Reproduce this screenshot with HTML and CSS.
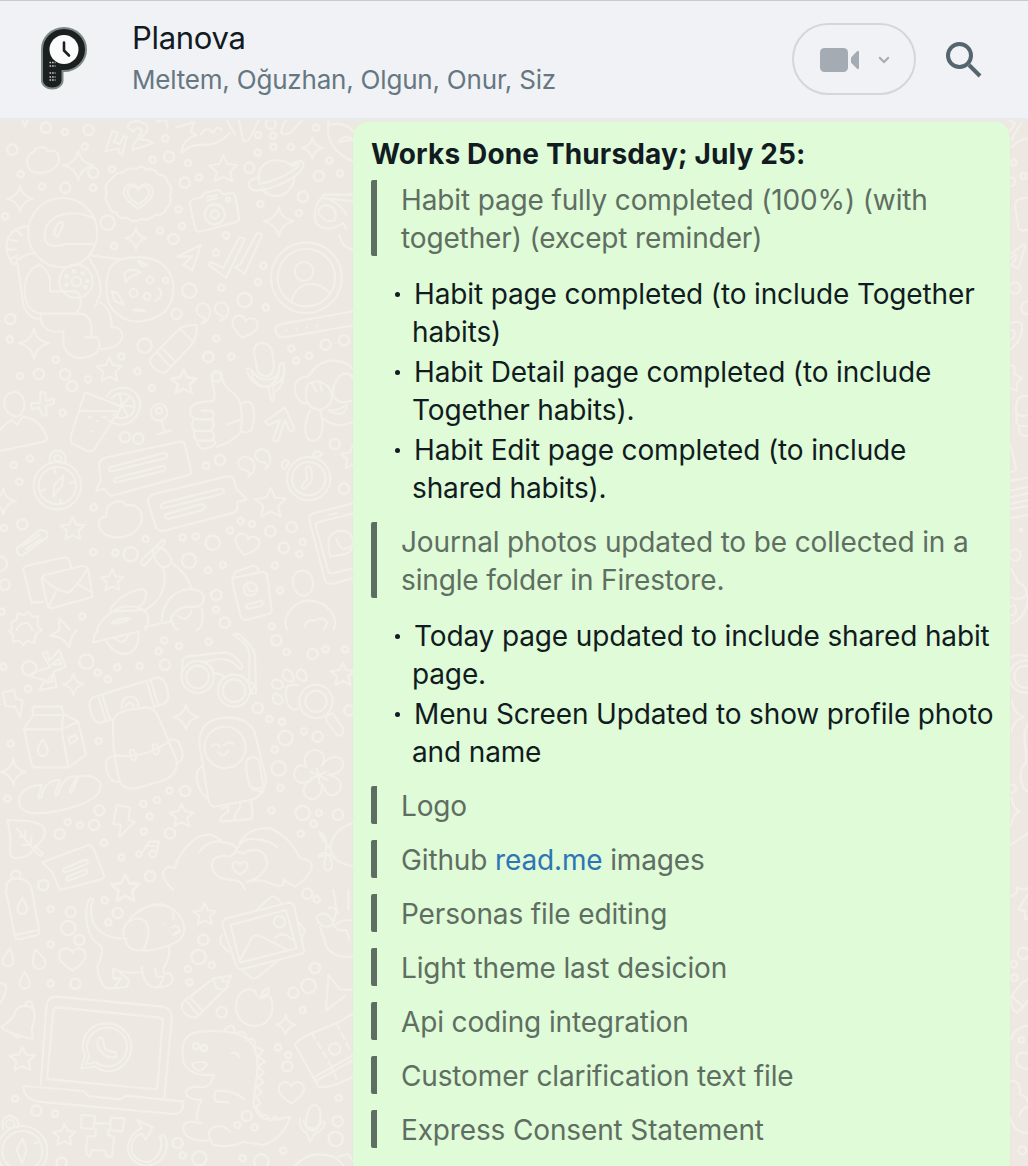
FILE: index.html
```html
<!DOCTYPE html>
<html lang="en">
<head>
<meta charset="utf-8">
<title>Planova</title>
<link rel="stylesheet" href="styles.css">
</head>
<body>
<header class="topbar">
  <svg class="avatar" viewBox="0 0 80 80" aria-hidden="true">
    <circle cx="40" cy="40" r="39" fill="#f1f2f4"/>
    <path d="M18 61.500V30.500a22 21.500 0 1 1 22 21.500H38.500V61.500a10.200 8 0 0 1-20.500 0z" fill="#1b1f20" stroke="#7b8987" stroke-width="2"/>
    <circle cx="40" cy="30.500" r="14.500" fill="#fbfbfb"/>
    <path d="M40 23.500v8l5 5" fill="none" stroke="#1b1f20" stroke-width="2.600" stroke-linecap="round" stroke-linejoin="round"/>
    <path d="M25.500 43.500h6M25.500 47h6M25.500 54h6M25.500 58h6M25.500 61h6" stroke="#c9cdcc" stroke-width="1.600" stroke-dasharray="1.600 1"/>
  </svg>
  <div class="who">
    <div class="name">Planova</div>
    <div class="members">Meltem, Oğuzhan, Olgun, Onur, Siz</div>
  </div>
  <div class="call">
    <svg class="camera" viewBox="0 0 40 24" aria-hidden="true"><rect width="28" height="24" rx="4.500"/><path d="M31 9.500L36.500 3.800Q39 1.500 39 4.500V19.500Q39 22.500 36.500 20.200L31 14.500z"/></svg>
    <svg class="caret" viewBox="0 0 12 8" aria-hidden="true"><path d="M1.200 1.200L6 6l4.800-4.800"/></svg>
  </div>
  <svg class="search" viewBox="0 0 36 36" aria-hidden="true"><circle cx="13.500" cy="13.500" r="11.500"/><path d="M23 23L34 34"/></svg>
</header>
<main class="chat">
  <svg class="doodles" viewBox="0 118 1028 1048" aria-hidden="true">
    <defs>
      <path class="shape" id="star" d="M0-40L12-14L42-11L20 9L27 38L0 24L-26 38L-20 9L-42-10L-12-14Z"/>
      <path class="shape" id="spark" d="M0-45Q5-8 45 0Q8 8 0 45Q-8 8-45 0Q-7-7 0-45Z"/>
      <path class="shape" id="heart" d="M0 32Q-38 8-38-10C-38-36-6-38 0-18C6-38 38-36 38-10Q38 8 0 32Z"/>
      <path class="shape" id="drop" d="M0-30Q20 0 16 14A17 17 0 0 1-16 14Q-20 0 0-30Z"/>
      <path class="shape" id="bolt" d="M-20-45L20-38L15 0L35 5L-12 50L-8 15L-30 12Z"/>
      <path id="dotS" d="M195 42h0M254 86h0M62 169h0M126 205h0M279 209h0M336 153h0M458 125h0M564 135h0M597 178h0M535 274h0M546 324h0M480 338h0M342 384h0M15 295h0M678 352h0M648 404h0M790 443h0M774 492h0M664 509h0M797 568h0M781 258h0M897 285h0M1020 166h0M988 128h0M948 29h0M873 87h0M773 104h0M819 53h0M820 87h0M774 51h0M496 61h0M649 662h0M694 716h0M364 715h0M167 725h0M29 664h0M874 692h0M888 728h0M927 713h0M59 774h0M412 760h0M264 784h0M456 811h0M188 884h0M90 1022h0M41 1041h0M58 1091h0M13 1230h0M281 1168h0M437 1263h0M280 1302h0M346 1304h0M548 1258h0M587 1255h0M690 1238h0M722 1209h0M756 1218h0M618 1043h0M624 1356h0M669 1341h0M825 1342h0M908 1272h0M898 1308h0M840 1417h0M648 1475h0M247 1495h0M5 1481h0M815 1525h0M493 1567h0M476 1600h0M537 1584h0M626 1571h0M860 1602h0M977 1594h0M1035 1594h0M352 1648h0M293 1664h0M323 1684h0M419 1644h0M84 1712h0M10 1646h0M32 1877h0M296 1869h0M808 1803h0M846 1811h0M912 1840h0M824 1895h0M841 2009h0M814 2077h0M957 2085h0M941 2117h0M902 2147h0M508 2018h0M470 2046h0M430 2057h0M449 2095h0M431 2140h0M203 2112h0M240 2121h0M312 2174h0M364 2218h0M22 2042h0M152 2373h0M314 2347h0M152 2479h0M152 2596h0M325 2413h0M563 2553h0M569 2593h0M635 2541h0M908 2676h0M834 2788h0M865 2811h0M950 2344h0M45 2942h0M165 2987h0M548 3112h0M728 3121h0M850 3098h0M1016 2940h0M712 3021h0M764 3028h0M588 2784h0M612 2790h0"/>
      <path id="dotM" d="M138 29h0M266 36h0M37 95h0M196 209h0M280 164h0M507 116h0M554 194h0M748 149h0M909 236h0M957 174h0M520 363h0M812 18h0M530 588h0M31 603h0M977 680h0M1032 667h0M625 717h0M195 769h0M117 768h0M650 775h0M216 805h0M375 957h0M415 962h0M660 1026h0M1004 978h0M1032 1112h0M67 1219h0M811 1240h0M875 1227h0M851 1289h0M649 1431h0M674 1514h0M14 1400h0M938 1608h0M829 1567h0M495 1640h0M773 1770h0M1048 1777h0M953 1856h0M555 2019h0M298 2077h0M282 2121h0M179 2148h0M510 2146h0M1014 2090h0M450 2275h0M130 2301h0M212 2382h0M353 2385h0M238 2466h0M226 2597h0M610 2465h0M945 2550h0M880 2624h0M665 2683h0M862 2845h0M109 2978h0M533 3075h0M740 2994h0M1013 3010h0M922 2327h0M185 3134h0"/>
      <path id="dotL" d="M323 314h0M568 518h0M734 546h0M434 683h0M392 1309h0M567 1328h0M638 1274h0M0 1337h0M88 1651h0M259 1631h0M856 1860h0M836 1951h0M908 2085h0M205 2430h0M596 2517h0M926 2604h0M1007 3063h0M598 3121h0M784 3130h0"/>
    </defs>
    <g transform="translate(0 118) scale(.33333)">
      <g class="ring"><use href="#dotS" stroke-width="26"/><use href="#dotM" stroke-width="38"/><use href="#dotL" stroke-width="50"/></g>
      <g class="hole"><use href="#dotS" stroke-width="11"/><use href="#dotM" stroke-width="23"/><use href="#dotL" stroke-width="36"/></g>
    </g>
    <g class="ink" transform="translate(0 118) scale(.33333)">
      <use href="#spark" x="235" y="142"/><use href="#spark" transform="translate(60 242) scale(.85)"/><use href="#spark" transform="translate(408 361) scale(.7)"/><use href="#spark" x="836" y="310"/><use href="#spark" transform="translate(937 90) scale(.7)"/><use href="#spark" x="102" y="676"/><use href="#spark" transform="translate(75-10) scale(.8)"/>
      <use href="#star" x="670" y="152"/><use href="#star" transform="translate(328 754) scale(.9)"/><use href="#star" transform="translate(552 792) scale(.9)"/>
      <use href="#heart" transform="translate(415 235) scale(1.150)"/><use href="#heart" transform="translate(415 232) scale(.85)"/><use href="#heart" transform="translate(733 628) rotate(12)"/>
      <path d="M103 100C105 85 140 82 144 100C180 90 185 130 165 148C140 170 95 172 84 145C78 125 85 110 103 100Z"/>
      <path d="M316 100L337 38L354 44L342 73L360 78L371 54L380 58L366 110L357 104L356 92ZM383 28Q385 8 414 10Q450 18 442 38L420 64Q450 65 458 76L398 97L400 80Q425 50 425 35Q410 22 400 40Z"/>
      <path d="M338 180Q350 160 370 164Q385 145 405 155Q425 138 440 155Q465 148 475 170Q500 170 502 192Q520 210 510 232Q518 255 500 270Q490 295 465 290Q445 310 425 302Q400 318 382 300Q355 305 350 285Q325 280 328 260Q310 245 320 225Q308 200 338 180Z"/>
      <path d="M580 244L605 238L615 224L655 215L668 228L695 225Q705 227 707 240L717 298Q717 310 707 313L600 341Q588 342 585 330L570 262Q568 247 580 244ZM622 237L650 232M622 247L652 240"/><circle cx="644" cy="289" r="30"/><circle cx="644" cy="289" r="12"/><circle cx="684" cy="245" r="6"/>
      <path d="M778 190C768 150 800 125 832 127C850 127 865 133 875 143M884 175C880 210 855 234 832 234C812 234 795 225 785 213M875 138Q920 115 908 150C885 190 770 235 750 210Q735 185 778 178M778 198Q850 185 895 145Q900 125 880 145"/>
      <circle cx="188" cy="344" r="104"/><path d="M285 302C240 280 160 275 138 330C125 370 140 395 200 378H280M162 350Q165 320 182 312Q200 310 172 356ZM84 325Q40 325 22 365Q12 410 42 440Q60 410 108 405M50 420L70 560Q85 605 122 602M118 440C85 450 70 490 75 530C80 570 95 587 140 587H225C250 570 245 525 225 520H150V485Q145 455 118 440M122 590C120 640 160 645 190 640V670C190 710 230 730 270 715C300 705 305 675 290 658H255M190 587H235C265 585 280 610 273 655M265 418Q310 480 300 530L285 565M300 553Q335 570 335 628C375 620 390 690 303 693M270 412L365 425M50 337L66 352M29 365L52 370M22 395L48 395M29 425L52 412"/>
      <circle cx="228" cy="490" r="50"/><circle cx="229" cy="491" r="14"/><path d="M200 475h1M222 460h1M248 466h1M262 490h1M256 508h1M200 500h1" stroke-width="4.500"/>
      <path d="M350 430C380 415 450 410 490 440C530 480 530 540 495 580C460 610 400 620 370 600C330 580 315 540 320 490C322 460 330 440 350 430ZM372 465Q395 445 422 463Q385 475 378 492ZM335 520L352 525L372 560L345 550ZM415 428L443 440Q430 450 420 438ZM476 510Q495 530 465 550M400 577L435 580Q420 570 400 577"/><circle cx="450" cy="486" r="10"/><circle cx="401" cy="525" r="12"/><circle cx="441" cy="535" r="10"/><circle cx="497" cy="487" r="8"/>
      <path d="M532 416L603 381L577 457L550 440L577 415ZM625 440L632 432L670 450L718 358L735 363L678 480ZM706 447L720 440L772 345L787 350L733 468Z"/>
      <circle cx="919" cy="479" r="106"/><circle cx="919" cy="479" r="86"/><circle cx="912" cy="460" r="28"/><path d="M875 550C890 480 965 490 987 525"/>
      <path d="M606 617Q620 600 610 598C580 590 585 555 612 556C640 565 635 605 606 617ZM660 608Q673 600 665 593C635 585 640 553 665 553C695 560 690 600 660 608Z"/>
      <path d="M450 722L540 630Q570 618 590 622Q592 650 580 675L498 762Q480 768 462 750Q448 738 450 722ZM470 700L510 745M485 690L525 730M540 632L578 670"/>
      <path d="M1060 580L845 618Q820 625 828 645Q838 662 860 657L1060 622M858 637h1M889 632h1M920 628h1M951 623h1"/>
      <path d="M762 700Q765 672 790 676Q815 680 818 710L822 745Q820 775 795 775Q770 770 770 745ZM740 752Q755 745 760 785Q800 830 835 775Q835 730 852 735Q855 810 820 825M925 775Q955 725 1005 728Q1040 730 1060 755"/>
      <path d="M530 28L583 12L572 40L590 52Q545 65 545 105Q565 80 610 80Q650 85 690 45M603 50Q620 20 640 45Q650 20 665 35M680 5L705 50M715 0L730 68Q745 75 755 50L780 0M843 45Q850 0 875 0M845 45Q870 55 885 30L912 0M472 10L498 5L503 30M985 10C975 70 1010 110 1060 130M990 20Q1035 10 1060 40M1018 72Q1030 45 1060 65Z"/>
      <path d="M970 230H1060M970 240L1060 250M970 235C940 260 935 310 960 325C985 340 1015 325 1030 315L1040 335M970 240Q1010 245 1040 290M1018 350Q1025 390 1060 395M955 285Q955 260 985 262Q1015 275 1005 305Q980 320 955 285Z"/>
    </g>
    <g class="ink" transform="translate(0 370) scale(.33333)">
      <path d="M40 65C70 65 80 100 68 125Q58 145 40 137C5 125 0 75 40 65ZM0 180Q15 160 35 150L52 165L68 140Q120 145 142 205Q140 212 130 215L0 243M93 100L120 98L122 65L135 67L138 92L162 86V100L137 108L140 135L128 137L118 112L95 117Z"/>
      <path d="M255 67L365 110L282 240Q270 248 255 240L215 220Q210 210 212 200ZM240 123H350M320 80C340 45 400 40 420 90C425 150 370 185 325 150M335 85C370 50 415 85 402 120C390 150 350 150 340 132M365 105L360 75M365 105L390 80M365 105L400 110M365 105L385 140M365 105L350 140M265 142h8M310 142h8M290 153h4M275 184h4"/>
      <circle cx="477" cy="127" r="25"/><circle cx="477" cy="122" r="9"/><path d="M483 152L495 185M472 193L512 182"/>
      <path d="M590 100C600 92 625 97 640 92C652 65 630 40 638 15Q655-5 665 20Q670 45 690 62Q720 80 722 110Q730 155 720 190Q690 220 650 230M605 122H635Q645 130 638 148H590Q565 140 572 115Q580 100 590 100M580 150Q570 180 590 183H630Q650 165 635 148M582 185Q580 210 595 212H635Q650 198 635 183M590 212Q595 240 620 235Q655 228 642 210M680 163L720 150M722 102Q740 90 755 100Q770 130 755 180Q735 195 722 180"/>
      <path d="M742 5Q760 55 805 50Q850 40 855 0M755 0Q775 35 810 28Q835 20 838 0M805 52L813 88Q820 100 822 85L820 50M795 155L855 113L883 175Q880 190 868 180L855 150L835 210Q820 222 820 205L840 150L805 165Z"/>
      <path d="M920 20Q880 25 885 65Q895 100 920 100M918 70Q915 30 960 35Q1000 50 995 90Q975 130 940 115Q915 100 918 70M925 15L940 0M950 65L935 40M965 62L960 42M998 70Q1000 30 1030 10Q1060 10 1060 30M998 70Q1010 110 1060 90M930 120C905 180 915 215 945 212C975 200 970 150 960 122M970 145Q1005 180 1060 155M985 120Q1010 125 1040 105Q1035 150 985 120"/>
      <circle cx="172" cy="347" r="71"/><circle cx="172" cy="347" r="56"/><path d="M150 278Q145 245 172 242Q202 245 196 280M172 255Q185 255 183 270Q172 280 163 268Q162 255 172 255M190 317L187 345L160 380L163 345ZM163 297L166 308M210 340L222 336M125 362L137 358M180 400L182 388"/>
      <path d="M320 262L540 215Q552 213 555 225L573 300Q574 312 563 316L335 377Q325 377 315 357L288 362L302 330L297 285Q300 267 320 262ZM330 292L495 248Q508 255 495 265L335 304Q322 303 330 292ZM345 325L490 287Q503 293 490 303L350 337Q337 337 345 325ZM460 373L685 318Q698 318 702 330L710 358L740 387L712 397V415Q708 427 695 430L490 483Q475 484 468 472L445 400Q440 380 460 373ZM488 400L665 355Q680 362 665 372L490 415Q475 413 488 400ZM498 433L605 402Q622 408 608 420L505 447Q490 445 498 433Z"/>
      <path d="M320 440C310 395 370 380 378 407C420 395 435 440 418 470C390 510 330 510 305 485C290 465 295 440 320 440Z"/>
      <path d="M745 320Q753 305 735 300C705 295 710 260 740 260C770 270 770 305 745 320ZM795 297Q805 287 795 278C760 275 755 240 785 237C815 240 820 285 795 297Z"/>
      <circle cx="926" cy="326" r="65"/><circle cx="926" cy="326" r="50"/><path d="M917 295Q920 288 930 291Q937 300 936 330Q925 348 912 356Q905 356 905 348L922 325ZM940 250Q950 238 968 250Q960 265 940 258ZM848 295Q840 275 857 270Q875 278 860 285Q860 300 848 295"/>
      <use href="#star" transform="translate(550 34) scale(.9)"/><use href="#star" transform="translate(218 475) scale(.85)"/><use href="#star" transform="translate(812 398) scale(1.100)"/><use href="#star" transform="translate(337 630) scale(.8)"/><use href="#star" transform="translate(1060 260) scale(.9)"/><use href="#spark" transform="translate(10 394) scale(.85)"/><use href="#heart" transform="translate(740 525) rotate(15) scale(.95)"/>
      <path d="M50 535L120 480Q145 480 143 500L70 555Q50 560 50 535ZM70 527L118 495M78 538L122 507M95 700L70 600Q70 590 80 587L195 562Q208 562 213 590M95 698L130 696M125 628Q125 618 135 615L245 588Q260 587 264 597L278 680L155 715Q145 715 142 705ZM128 625Q170 665 205 668Q230 650 262 598M145 710L168 665M278 668L238 645"/>
      <path d="M425 570L490 508Q500 512 490 525L435 585Q420 590 425 570ZM458 545C465 520 500 530 515 570Q510 595 485 590Q465 575 458 545ZM490 592C500 640 490 690 435 720L330 725M518 580Q560 610 575 655M330 720Q360 670 425 657Q450 660 430 700L415 712M290 780Q310 730 370 710Q430 705 442 735Q450 765 435 780M485 755Q490 670 565 657Q625 660 608 700Q590 715 565 710Q520 715 510 755L435 770M535 738Q560 760 575 722M605 715Q615 770 590 780M515 750Q520 775 535 780M335 760Q345 745 390 745Q370 760 335 760"/>
      <path d="M705 605L760 587Q775 590 775 605M697 625L790 605Q800 608 802 620L815 720Q815 730 803 733L738 750Q725 748 722 738L697 640Q695 625 705 605ZM740 705L783 692Q795 700 783 708L745 716Q735 713 740 705Z"/><circle cx="751" cy="657" r="20"/><path d="M742 648Q748 672 764 660"/>
      <path d="M1060 400L940 430Q925 435 928 450L975 630Q980 643 995 642L1060 625M1060 430L955 457Q945 460 948 470L985 605Q990 612 1000 610L1060 595M988 435L1012 430M990 560L985 520Q985 485 1025 482Q1060 485 1060 520Q1055 555 1020 555ZM1010 510Q1025 550 1050 530"/>
      <path d="M905 602C935 602 945 635 935 660Q920 685 900 675C870 655 870 605 905 602ZM862 780C840 735 890 690 930 692C980 695 1020 740 1000 780M915 770Q920 745 945 752Q970 735 982 760L970 780M35 780L35 755L50 750L52 730L72 735L85 725L98 740L115 740L112 765L125 780M50 780Q60 755 85 760L98 780M178 780V745L210 780"/>
    </g>
    <g class="ink" transform="translate(0 630) scale(.33333)">
      <path d="M25 0L40 15L38 35L58 32L70 45L82 32L103 38L108 12L125 0M150 18Q188 15 207 52Q215 10 232 0M150 18L178 0M280 35Q280 15 295 0M280 37L415 5Q420 65 375 72Q335 70 318 30M345 25Q370 50 385 15"/>
      <path d="M127 70L142 65L148 92L178 60L197 110L160 125L170 172L118 180L135 150L97 142L95 130L150 112ZM155 103L178 85L183 103ZM140 157L155 135L157 155ZM8 188L42 180L47 205L68 212L60 262L45 230L17 228Z"/>
      <path d="M97 240Q97 230 107 230H185L192 255H100ZM100 255L72 295L95 405Q98 412 110 412H205L258 375L235 275L190 252L185 298H72M185 298L205 412M185 298L235 275M205 325L228 315L232 328L210 342Z"/><use href="#drop" transform="translate(128 355) scale(.9)"/>
      <path d="M290 198L470 143Q500 140 505 200Q505 218 480 225L462 231M338 268L300 278Q278 280 268 225Q270 200 290 198M295 200L317 270M307 197L330 268M440 155L462 230M452 150L475 225M365 235Q365 200 390 200Q415 200 415 230M375 232Q390 205 403 230M340 270Q350 245 385 240L440 232Q462 232 475 260L530 390Q535 430 495 450L410 475Q370 480 360 455Q335 370 340 270M345 375Q420 390 500 340M503 333Q530 320 540 345Q560 390 530 400M350 378Q310 375 320 420Q330 460 355 455M390 360Q405 355 410 380Q400 400 390 380ZM458 345Q470 335 478 360Q475 380 462 370Z"/>
      <circle cx="593" cy="141" r="48"/><circle cx="593" cy="141" r="34"/><circle cx="702" cy="182" r="48"/><circle cx="702" cy="182" r="34"/><path d="M548 95Q550 75 580 78L665 68Q705 65 728 110Q725 125 710 108Q690 85 660 87L610 95Q645 110 640 130Q675 130 670 145M700 15Q715 5 730 25Q760 50 765 75L768 190H750L765 165Q740 150 720 135M706 20Q750 45 748 80V148M548 95L545 140"/>
      <circle cx="948" cy="214" r="50"/><circle cx="948" cy="214" r="32"/><path d="M895 165Q870 163 860 170Q850 220 880 240L895 235M860 118Q885 128 880 152Q865 160 850 142Q845 120 860 118ZM905 118Q925 130 918 152Q900 155 890 140Q890 120 905 118ZM825 148Q850 150 850 170Q840 182 820 172Q810 155 825 148ZM825 190Q845 195 850 215Q840 228 822 218Q815 200 825 190ZM978 265Q980 255 998 250L1030 295Q1032 315 1015 318L980 275Z"/>
      <circle cx="675" cy="352" r="62"/><path d="M605 380C580 290 630 264 680 262C730 262 757 285 765 310L798 445Q795 500 750 510L645 530Q630 530 625 510L605 380M605 410Q585 420 592 455Q600 490 622 505M740 390Q765 370 778 395L790 470Q775 480 750 470Q735 420 740 390M637 348Q650 335 660 350M673 345Q685 330 700 342M653 367Q672 385 685 362M665 535L685 530V545Q655 560 663 575L755 567Q760 550 753 515M720 520V535Q700 550 705 570M757 478L790 485"/>
      <path d="M920 410C900 375 940 345 965 368C980 385 970 400 965 408C990 370 1030 375 1030 405C1025 430 1000 432 985 435C1025 440 1035 475 1005 495C975 500 975 475 965 460C970 495 945 520 918 500C900 475 920 460 935 450C900 470 875 450 885 420C895 400 910 405 920 410M957 437L950 415M957 437L978 425M957 437L983 450M957 437L957 460M957 437L932 445M957 437L930 425"/>
      <path d="M60 530C45 480 95 465 125 465L115 500Q115 510 125 500C130 465 150 450 180 450L165 490Q165 505 175 490C185 450 205 438 232 438L210 480Q210 495 220 480L235 440C280 430 310 450 300 480C285 520 185 545 120 550Q75 552 60 530ZM22 570Q110 570 130 590C150 625 100 650 92 670C60 690 30 690 30 665Q35 620 22 570ZM50 595L90 645L120 678L130 672L102 645M60 620L75 620L77 600M67 645L92 645L95 620"/>
      <path d="M127 697L265 645Q275 645 280 655L313 738L305 748L180 780L155 725ZM190 717L258 688Q268 695 260 703L195 727Q185 725 190 717ZM200 742L258 718Q265 725 258 733L205 752Q195 750 200 742ZM20 780Q15 750 45 745Q90 745 95 780M38 745Q25 730 45 722Q70 725 58 745"/>
      <use href="#bolt" x="370" y="570"/><use href="#spark" transform="translate(220 163) scale(.7)"/><use href="#spark" transform="translate(558 261) scale(.85)"/><use href="#spark" transform="translate(40 426) scale(.85)"/><use href="#star" transform="translate(545 556) scale(.85)"/><use href="#star" transform="translate(1028 132) scale(.85)"/><use href="#star" x="376" y="772"/>
      <circle cx="417" cy="672" r="8"/><circle cx="458" cy="672" r="10"/><path d="M425 670L447 635H477L470 670M440 648H470"/>
      <path d="M520 780Q475 735 495 718Q500 705 525 715Q530 680 570 640Q600 610 635 615Q660 625 668 637Q715 640 708 665L690 680Q635 670 635 710Q645 750 700 750Q725 750 735 780M598 665Q630 625 670 637M708 665Q725 620 770 628Q810 630 832 652M718 640Q745 590 810 595Q870 620 900 685Q940 690 935 715Q920 750 885 770Q850 750 850 745Q860 780 810 760Q785 745 740 755M710 665Q730 675 745 662Q795 650 802 700Q795 740 740 755"/><use href="#heart" transform="translate(720 715) scale(.6)"/>
      <path d="M1060 580C990 600 975 660 1010 690Q1030 705 1060 708M990 655L970 630Q945 590 970 615Q982 630 978 660M990 675L955 680Q970 660 990 675M978 680Q965 720 985 722Q1005 715 990 680"/>
    </g>
    <g class="ink" transform="translate(0 890) scale(.33333)">
      <path d="M17 0L45 140Q48 150 60 148L110 135Q120 132 118 122L95 0M45 135L115 120"/><use href="#drop" transform="translate(67 50) scale(.85)"/><use href="#drop" transform="translate(25 205) rotate(10) scale(.95)"/><use href="#drop" transform="translate(115 210) rotate(-18) scale(1.100)"/><use href="#drop" transform="translate(74 273) scale(.9)"/><use href="#heart" transform="translate(217 208) scale(1.050)"/><use href="#heart" transform="translate(874 608)"/>
      <path d="M380 145Q310 150 280 100Q265 60 280 30Q270 15 262 40C250 100 270 150 300 165Q315 180 292 230Q295 270 315 293Q340 298 380 290Q395 270 375 260L358 245M370 130Q370 90 415 85C455 90 450 140 430 180Q380 190 370 130M390 85Q440 35 495 47Q550 65 553 120Q550 150 520 160Q480 180 430 182M455 45Q490 35 520 60V88M508 168Q510 210 490 235L492 250H510Q530 275 500 288Q470 295 455 290Q430 280 425 232M340 235Q375 255 427 245M340 235V265H362L345 290M465 235L470 260H492L480 285M490 103h1M518 112Q530 100 540 120L525 130M520 135L540 125"/>
      <use href="#star" transform="translate(614 72) scale(.8)"/><use href="#star" transform="translate(376-5)"/><use href="#star" transform="translate(67 506) scale(.9)"/><use href="#star" transform="translate(193 734) scale(.8)"/><use href="#spark" transform="translate(857 404) scale(.65)"/>
      <path d="M680 85L865 38Q880 38 883 50L912 180Q912 190 900 193L725 238Q712 238 708 225L667 105Q667 90 680 85ZM692 105L858 60L890 175L720 218ZM720 210L755 145Q770 128 790 143L860 178M825 143Q850 120 878 150M770 60L815 18Q830 20 845 40M725 238L755 265Q765 268 775 260L830 215M667 135Q655 150 665 165L685 185M895 95L915 120L905 145"/><circle cx="838" cy="95" r="17"/>
      <path d="M545 350Q545 335 570 320L640 265L693 257L682 290L590 382Q570 385 555 370Q545 360 545 350ZM560 335L595 375M572 325L608 363M640 267L650 295L675 300M665 260L670 275L685 275M765 305C740 285 705 310 708 360C715 395 745 410 765 407C800 410 820 375 817 345C815 320 805 305 785 320M765 303Q770 320 785 325Q810 320 805 293Q785 300 782 325"/>
      <path d="M122 585L140 345Q145 320 170 320L490 350Q515 355 515 385L493 625M142 560L160 360Q162 352 175 352L480 383Q490 385 488 395L472 590Q470 598 460 597L150 568Q140 565 142 560M70 588L250 603L265 618L360 628L380 617L550 635Q550 675 520 672L115 635Q70 625 70 588"/><path d="M243 535L255 498C235 450 265 400 320 400C375 402 405 450 390 495C370 545 320 555 285 530ZM258 522L268 498C248 460 275 412 325 412C365 415 390 455 378 490C362 530 320 540 288 517ZM295 445Q310 435 312 465Q310 480 335 485Q355 485 348 500Q310 510 292 465Z"/>
      <path d="M5 410Q45 385 45 365Q65 335 100 355Q110 385 95 415L98 447L70 440Q10 425 5 410ZM75 350Q75 330 95 335Q100 345 95 355M38 430Q48 450 60 437M0 280Q30 275 10 325L0 340"/>
      <path d="M643 555Q565 560 550 515Q535 430 600 425Q710 415 750 455Q780 490 770 560L760 640Q770 690 820 690L870 680Q850 745 790 765L730 755Q690 775 640 765Q605 710 665 708Q690 720 690 725M640 555Q635 600 590 590Q550 595 560 615Q570 630 605 630Q590 660 590 690M605 700Q545 685 550 720Q560 755 625 752M733 628Q700 600 650 602Q635 620 650 635L685 637M675 420Q700 390 705 430Q740 415 740 450Q770 440 765 470L790 480L775 500L795 515L775 530L792 548L775 560L790 578L770 590L785 608L768 620L782 640L768 650L785 675L800 675L810 692L825 680L840 690M577 520Q620 510 620 525Q610 540 595 542Q580 535 577 520M695 490Q710 485 717 500"/>
      <path d="M1060 300L1020 298L985 255L978 362L1035 318M885 465Q890 450 935 430L1010 400L1060 370M885 465L945 570L955 590Q980 595 1010 583L1060 560M945 560L1060 495M945 575L1060 510"/><path d="M935 430L990 520M1010 400L1050 480M990 520L1015 580" stroke-dasharray="6 5"/><circle cx="1004" cy="477" r="17"/>
      <path d="M955 75Q980 60 1000 95Q1000 110 975 110Q950 100 950 80M1000 0L1010 60L1000 95M1045 0V60M985 55Q1000 45 1015 70M1060 90Q1010 90 1003 110Q1015 125 1040 120L1048 150M960 112L980 170Q1000 205 1060 200"/>
      <path d="M245 675L285 678L280 717L243 713ZM333 683L373 685L367 725L330 720ZM283 700H330M288 718L285 740L262 738L258 790L270 800L275 780L315 782L320 800H337L342 740L325 735V720M412 690L458 712L437 750L425 730Q390 745 395 785Q410 820 450 815Q495 790 480 740Q500 725 500 770Q495 820 440 828Q385 820 383 770Q390 730 425 715Z"/>
      <circle cx="67" cy="783" r="75"/><circle cx="67" cy="783" r="60"/><path d="M10 720Q0 680 30 677Q60 685 55 710M67 745L80 780L67 820L50 780ZM105 760L115 755"/><circle cx="30" cy="702" r="13"/>
      <path d="M918 700Q922 645 945 645Q965 650 960 690Q955 720 935 715Q918 712 918 700ZM900 685Q895 715 920 730L930 755L942 733Q970 725 975 695M910 690Q920 730 950 720L965 695M885 828Q920 785 980 795Q1015 800 1030 828M1015 800L1045 792L1060 815"/>
    </g>
    <g class="ink" transform="translate(1000 110) scale(.33333)">
      <path d="M28 30L45 40L30 62M62 42L34 88M34 112Q55 88 84 85M84 262L55 268Q43 275 46 295L55 350Q58 362 70 362L84 358M74 402L32 430M74 402Q78 405 74 415L55 475L32 465M32 445L45 433Q52 440 45 450L34 465M84 573Q62 578 64 598Q68 612 84 613M32 640Q60 628 66 645Q68 690 32 718M32 660Q50 660 42 680L32 690M32 765L44 770L42 790L66 805L50 820L52 842L32 835M84 858Q45 850 48 905Q55 925 84 915M50 912Q45 945 60 948H84M58 950Q55 975 72 978L84 975M32 1005L48 1075Q48 1085 32 1085M30 1112L84 1103M30 1142L84 1131M30 1162L84 1150M30 1182L84 1170M30 1198L84 1188M30 1225L84 1215M32 1375L55 1418Q80 1425 80 1455Q60 1475 32 1462M32 1490Q50 1480 48 1500T32 1515M84 1455Q85 1520 32 1542"/>
      <circle cx="41" cy="158" r="9"/><circle cx="70" cy="198" r="9"/><circle cx="32" cy="215" r="13"/><circle cx="45" cy="534" r="17"/><circle cx="45" cy="1335" r="17"/><circle cx="63" cy="1260" r="4"/>
    </g>
    <g class="ink" transform="translate(1000 636) scale(.33333)">
      <circle cx="76" cy="122" r="48"/><circle cx="76" cy="122" r="33"/>
      <path d="M30 65Q50 50 84 62M36 195Q42 235 72 243Q42 250 34 285M84 265Q68 285 75 325Q80 355 78 380Q55 395 65 440Q72 465 84 465M34 485Q38 515 58 527Q38 535 32 570M30 628L84 592M32 780Q55 775 50 755Q70 765 84 755M84 775L72 792L56 820L74 825L75 850L84 845M66 1040L84 1030M66 1040L34 1080Q28 1105 42 1125L52 1130L84 1095M36 1080L72 1115M32 1210Q45 1175 84 1168M84 1255Q50 1240 48 1275Q55 1300 84 1298M32 1335Q62 1330 60 1375Q85 1385 84 1400M58 1440Q65 1415 84 1412M30 1445Q45 1495 84 1490"/>
      <circle cx="36" cy="458" r="12"/><circle cx="70" cy="952" r="17"/><circle cx="41" cy="985" r="10"/><circle cx="43" cy="1025" r="10"/><circle cx="64" cy="1212" r="8"/><circle cx="67" cy="1543" r="12"/>
    </g>
  </svg>
  <article class="bubble">
    <p class="title">Works Done Thursday; July 25:</p>
    <blockquote class="two first">Habit page fully completed (100%) (with<br>together) (except reminder)</blockquote>
    <ul>
      <li>Habit page completed (to include Together<br>habits)</li>
      <li>Habit Detail page completed (to include<br>Together habits).</li>
      <li>Habit Edit page completed (to include<br>shared habits).</li>
    </ul>
    <blockquote class="two">Journal photos updated to be collected in a<br>single folder in Firestore.</blockquote>
    <ul>
      <li>Today page updated to include shared habit<br>page.</li>
      <li>Menu Screen Updated to show profile photo<br>and name</li>
    </ul>
    <blockquote>Logo</blockquote>
    <blockquote>Github <a class="link">read.me</a> images</blockquote>
    <blockquote>Personas file editing</blockquote>
    <blockquote>Light theme last desicion</blockquote>
    <blockquote>Api coding integration</blockquote>
    <blockquote>Customer clarification text file</blockquote>
    <blockquote>Express Consent Statement</blockquote>
  </article>
</main>
</body>
</html>
```

FILE: styles.css
```css
* { box-sizing: border-box; }
html, body { margin: 0; height: 1166px; overflow: hidden; }
body {
  display: flex;
  flex-direction: column;
  font-family: Inter, "Liberation Sans", sans-serif;
  color: #111b21;
  background: #ede8e2;
}
.topbar {
  flex: none;
  height: 120px;
  display: flex;
  align-items: center;
  padding: 0 46px 2px 24px;
  background: #f0f2f6;
  border-top: 1px solid #c9cacf;
  border-bottom: 2px solid #e6ebef;
}
.avatar { width: 80px; height: 80px; margin-right: 28px; }
.who { flex: 1; white-space: nowrap; }
.name { font-size: 31px; line-height: 42px; letter-spacing: -.3px; }
.members { font-size: 26px; line-height: 42px; color: #667781; letter-spacing: -.2px; }
.call {
  width: 124px;
  height: 72px;
  display: flex;
  align-items: center;
  gap: 18px;
  padding-left: 26px;
  margin-right: 30px;
  border: 2px solid #d1d7db;
  border-radius: 36px;
}
.camera { width: 40px; height: 24px; margin-top: 2px; fill: #a4abb2; }
.caret { width: 12px; height: 8px; margin-top: 2px; fill: none; stroke: #a4abb2; stroke-width: 2; }
.search { width: 36px; height: 36px; margin-top: 2px; fill: none; stroke: #54656f; stroke-width: 4; }
.chat { position: relative; flex: 1; padding: 2px 18px 0 353px; overflow: hidden; }
.doodles { position: absolute; left: 0; top: -2px; width: 1028px; height: 1048px; }
.ink { fill: none; stroke: #f3f0eb; stroke-width: 2.1; stroke-linejoin: round; stroke-linecap: round; }
.ink path, .ink circle, .shape { vector-effect: non-scaling-stroke; }
.ring { fill: none; stroke: #f3f0eb; stroke-linecap: round; }
.hole { fill: none; stroke: #ede8e2; stroke-linecap: round; }
.bubble {
  position: relative;
  height: 1080px;
  padding: 13px 18px;
  background: #dffbd7;
  border-radius: 15px;
  box-shadow: 0 1px 1px rgba(11, 20, 26, .13);
  font-size: 28px;
  line-height: 38px;
  letter-spacing: -.14px;
  white-space: nowrap;
}
.title { margin: 0; font-weight: 700; letter-spacing: .14px; }
blockquote {
  height: 38px;
  margin: 15px 0 16px;
  padding: 1px 0 0 24px;
  border-left: 6px solid #5f6e62;
  border-radius: 2px;
  color: #5f6e62;
}
blockquote.two { height: 76px; }
blockquote.first { margin-top: 7px; }
blockquote + blockquote { margin-top: 0; }
ul { list-style: none; margin: 19px 0 15px; padding: 0 0 0 41px; }
li { position: relative; margin-bottom: 2px; text-indent: 2px; }
li br + * { text-indent: 0; }
li::before {
  content: "";
  position: absolute;
  left: -17px;
  top: 17px;
  width: 5px;
  height: 5px;
  border-radius: 50%;
  background: #111b21;
}
li:last-child { margin-bottom: 0; }
.link { color: #2e75b5; }
```
